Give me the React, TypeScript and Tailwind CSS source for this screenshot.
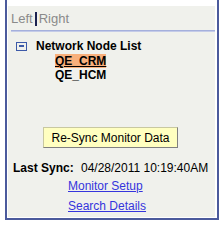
export default function App() {
  return (
    <div className="w-[221px] h-[225px] bg-white" style={{ fontFamily: '"Liberation Sans", Arial, sans-serif' }}>
      <div className="ml-[5px] w-[214px] h-[220px] border-x-2 border-b-2 border-[#4b5a9c] pt-[6px] pl-[1px] pr-[2px] pb-[1px]">
        <div className="h-full bg-[#f0f1ec] flex flex-col text-[12px] leading-[14px]">
          {/* top links */}
          <div className="pl-[3px] h-[24px] flex items-center text-[13px] text-[#8a8a8a] pt-[2px]">
            <span>Left</span>
            <span className="mx-[2px] w-[2px] h-[14px] bg-[#1b2150]" />
            <span>Right</span>
          </div>
          <div className="ml-[3px] h-[2px] bg-[#a5b0dc] border-b border-[#c4cbe8]" />

          {/* tree */}
          <div className="pl-[8px] pt-[7px]">
            <div className="flex items-center h-[14px]">
              <span className="w-[11px] h-[9px] border border-[#3d5aa8] flex items-center justify-center mr-[9px]">
                <span className="w-[5px] h-[2px] bg-[#3d5aa8]" />
              </span>
              <span className="font-bold text-black">Network Node List</span>
            </div>
            <div className="pl-[39px] mt-[1px] font-bold text-black">
              <div className="h-[14px]">
                <span className="underline bg-[#f8b07c] inline-block align-top">QE_CRM</span>
              </div>
              <div className="h-[14px]">QE_HCM</div>
            </div>
          </div>

          {/* button */}
          <div className="pl-[35px] mt-[45px] h-[21px] flex">
            <button className="w-[135px] h-[21px] bg-[#ffffc0] border border-[#c8c8a0] border-b-[#808080] border-r-[#808080] text-[12px] text-black leading-none">
              Re-Sync Monitor Data
            </button>
          </div>

          <div className="pl-[5px] mt-[13px] h-[14px] flex items-baseline text-black">
            <span className="font-bold w-[68px] shrink-0">Last Sync:</span>
            <span className="whitespace-nowrap">04/28/2011 10:19:40AM</span>
          </div>
          <div className="mt-[1px] flex flex-col text-[#3535dd]">
            <div className="h-[20px] flex items-center pl-[60px]">
              <span className="underline">Monitor Setup</span>
            </div>
            <div className="h-[20px] flex items-center pl-[60px]">
              <span className="underline">Search Details</span>
            </div>
          </div>
        </div>
      </div>
    </div>
  );
}
